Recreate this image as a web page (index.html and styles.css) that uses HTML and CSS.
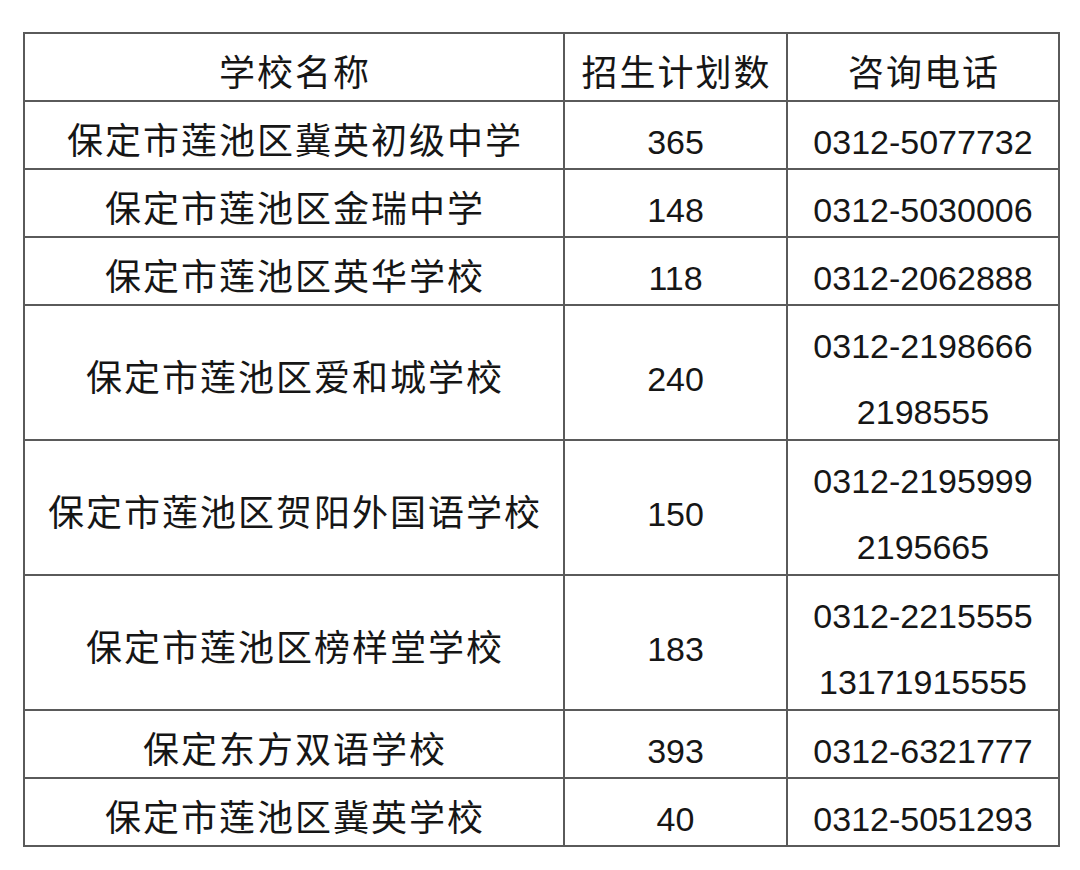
FILE: index.html
```html
<!DOCTYPE html>
<html lang="zh">
<head>
<meta charset="utf-8">
<title>学校招生计划</title>
<link rel="stylesheet" href="styles.css">
</head>
<body>
<table class="plan">
  <colgroup>
    <col class="c-name">
    <col class="c-num">
    <col class="c-tel">
  </colgroup>
  <tr class="row">
    <td class="cjk">学校名称</td>
    <td class="cjk">招生计划数</td>
    <td class="cjk">咨询电话</td>
  </tr>
  <tr class="row">
    <td class="cjk">保定市莲池区冀英初级中学</td>
    <td>365</td>
    <td>0312-5077732</td>
  </tr>
  <tr class="row">
    <td class="cjk">保定市莲池区金瑞中学</td>
    <td>148</td>
    <td>0312-5030006</td>
  </tr>
  <tr class="row">
    <td class="cjk">保定市莲池区英华学校</td>
    <td>118</td>
    <td>0312-2062888</td>
  </tr>
  <tr class="row row-2">
    <td class="cjk">保定市莲池区爱和城学校</td>
    <td>240</td>
    <td><span class="ln">0312-2198666</span><span class="ln">2198555</span></td>
  </tr>
  <tr class="row row-2">
    <td class="cjk">保定市莲池区贺阳外国语学校</td>
    <td>150</td>
    <td><span class="ln">0312-2195999</span><span class="ln">2195665</span></td>
  </tr>
  <tr class="row row-2">
    <td class="cjk">保定市莲池区榜样堂学校</td>
    <td>183</td>
    <td><span class="ln">0312-2215555</span><span class="ln">13171915555</span></td>
  </tr>
  <tr class="row">
    <td class="cjk">保定东方双语学校</td>
    <td>393</td>
    <td>0312-6321777</td>
  </tr>
  <tr class="row">
    <td class="cjk">保定市莲池区冀英学校</td>
    <td>40</td>
    <td>0312-5051293</td>
  </tr>
</table>
</body>
</html>
```

FILE: styles.css
```css
html, body {
  margin: 0;
  padding: 0;
  background: #ffffff;
}

body {
  padding: 32px 0 0 23px;
  font-family: "Liberation Sans", "Noto Sans CJK SC", sans-serif;
  color: #161616;
}

.plan {
  border-collapse: collapse;
  table-layout: fixed;
  width: 1035px;
}

.c-name { width: 540px; }
.c-num { width: 223px; }
.c-tel { width: 272px; }

.plan td {
  border: 2px solid #5a5a5a;
  text-align: center;
  vertical-align: middle;
  padding: 13px 0 0 0;
  font-size: 34px;
  line-height: 40px;
  white-space: nowrap;
}

.plan td.cjk {
  font-size: 36px;
  letter-spacing: 2px;
  text-indent: 2px;
}

.row td { height: 53px; }
.row-2 td { height: 120px; }

.ln {
  display: block;
}

.ln + .ln {
  margin-top: 26px;
}
```
